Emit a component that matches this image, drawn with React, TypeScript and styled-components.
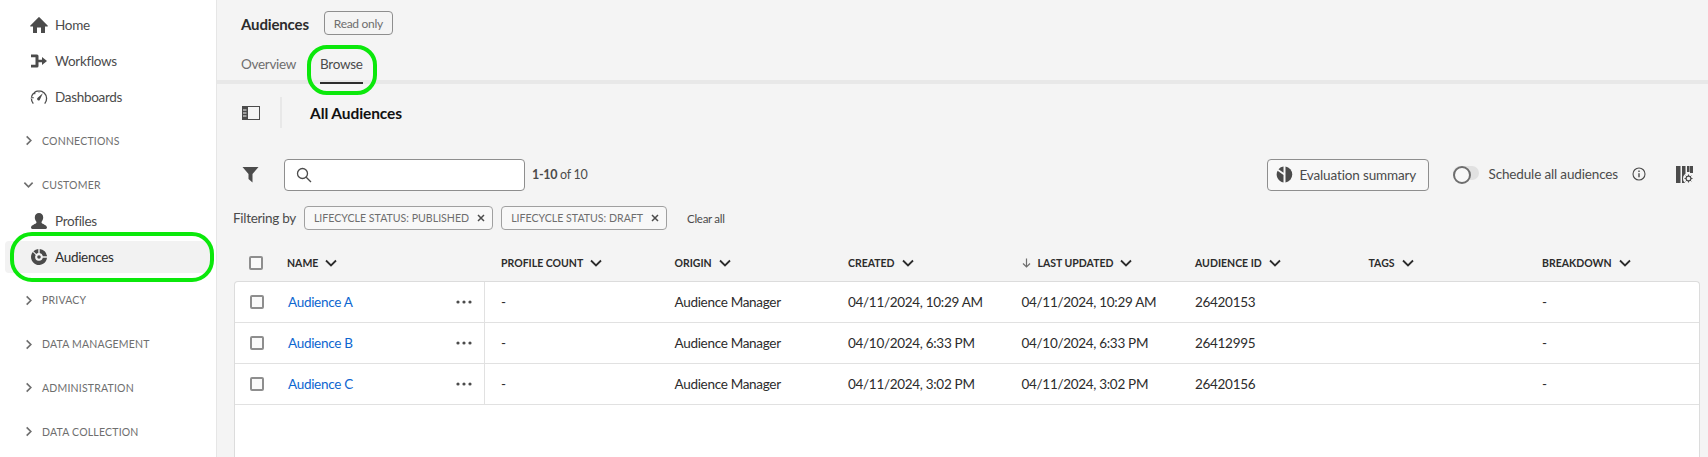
import styled, { createGlobalStyle } from 'styled-components';

const GlobalStyle = createGlobalStyle`
  html, body {
    margin: 0;
    padding: 0;
    height: 100%;
    overflow: hidden;
  }
  body {
    font-family: Lato, "Noto Sans", sans-serif;
    font-size: 13.5px;
    letter-spacing: -0.3px;
    color: #2c2c2c;
    background: #f4f4f4;
  }
  * {
    box-sizing: border-box;
  }
`;

const Page = styled.div`
  display: flex;
  width: 1708px;
  height: 457px;
  overflow: hidden;
`;

const Sidebar = styled.nav`
  flex: 0 0 217px;
  display: flex;
  flex-direction: column;
  padding: 7px 4px 0 5px;
  background: #ffffff;
  border-right: 1px solid #e6e6e6;
`;

const NavItem = styled.div<{ $active?: boolean }>`
  position: relative;
  display: flex;
  align-items: center;
  flex: 0 0 36px;
  gap: 7px;
  padding-left: 25px;
  color: ${(p) => (p.$active ? '#2c2c2c' : '#4b4b4b')};

  ${(p) =>
    p.$active &&
    `
    &::before {
      content: '';
      position: absolute;
      left: 0;
      right: 0;
      top: 2px;
      bottom: 2px;
      background: #f2f2f2;
      border-radius: 4px;
    }
  `}

  & > * {
    position: relative;
  }
`;

const NavIcon = styled.svg`
  width: 18px;
  height: 18px;
  flex: none;
  fill: #4b4b4b;
`;

const Section = styled.div`
  display: flex;
  align-items: center;
  flex: 0 0 36px;
  margin-top: 7.75px;
  padding-left: 18px;
  gap: 8px;
  font-size: 10.5px;
  letter-spacing: 0.2px;
  color: #6e6e6e;
`;

const SectionChevron = styled.svg`
  width: 11px;
  height: 11px;
  flex: none;
  fill: none;
  stroke: #6e6e6e;
  stroke-width: 1.8;
`;

const Ring = styled.div<{ $top: number; $left: number; $right: number; $bottom: number; $radius: number }>`
  position: absolute;
  top: ${(p) => p.$top}px;
  left: ${(p) => p.$left}px;
  right: ${(p) => p.$right}px;
  bottom: ${(p) => p.$bottom}px;
  border: 4px solid #0be80b;
  border-radius: ${(p) => p.$radius}px;
  pointer-events: none;
`;

const Main = styled.main`
  flex: 1;
  min-width: 0;
  display: flex;
  flex-direction: column;
  background: #f4f4f4;
`;

const TitleBar = styled.div`
  display: flex;
  align-items: center;
  gap: 15px;
  height: 47px;
  padding: 0 0 0 24px;
`;

const PageTitle = styled.div`
  font-weight: 700;
  font-size: 15px;
  letter-spacing: -0.15px;
  color: #2c2c2c;
`;

const ReadOnly = styled.div`
  display: flex;
  align-items: center;
  justify-content: center;
  width: 69px;
  height: 24px;
  margin-top: -1px;
  font-size: 12px;
  color: #6e6e6e;
  border: 1px solid #8e8e8e;
  border-radius: 4px;
`;

const Tabs = styled.div`
  display: flex;
  gap: 24px;
  height: 37px;
  padding-left: 24px;
  border-bottom: 4px solid #e8e8e8;
`;

const Tab = styled.div<{ $selected?: boolean }>`
  position: relative;
  height: 37px;
  padding-top: 9px;
  color: ${(p) => (p.$selected ? '#4b4b4b' : '#6e6e6e')};
  ${(p) => p.$selected && 'border-bottom: 2px solid #2c2c2c;'}
`;

const ListHeader = styled.div`
  display: flex;
  align-items: center;
  height: 43px;
  margin-top: 7px;
  padding-left: 25px;
`;

const PanelIcon = styled.svg`
  width: 18px;
  height: 14px;
  flex: none;
`;

const VDivider = styled.div`
  width: 2px;
  height: 31px;
  margin: 0 28px 0 20px;
  background: #e8e8e8;
`;

const ListTitle = styled.div`
  font-weight: 700;
  font-size: 15.5px;
  letter-spacing: -0.1px;
  color: #111111;
`;

const Toolbar = styled.div`
  display: flex;
  align-items: center;
  height: 33px;
  margin-top: 24px;
  padding: 0 15px 0 25px;
`;

const Funnel = styled.svg`
  width: 17px;
  height: 17px;
  flex: none;
  fill: #4b4b4b;
  margin-right: 25px;
`;

const SearchBox = styled.div`
  display: flex;
  align-items: center;
  width: 241px;
  height: 32px;
  padding-left: 11px;
  background: #ffffff;
  border: 1px solid #8e8e8e;
  border-radius: 4px;
`;

const SearchIcon = styled.svg`
  width: 16px;
  height: 16px;
  fill: none;
  stroke: #4b4b4b;
  stroke-width: 1.3;
`;

const Count = styled.div`
  margin-left: 7px;
  font-size: 12.5px;
  color: #4b4b4b;

  b {
    font-weight: 700;
  }
`;

const Spacer = styled.div`
  flex: 1;
`;

const SummaryButton = styled.div`
  display: flex;
  align-items: center;
  gap: 7px;
  width: 162px;
  height: 32px;
  padding-left: 8px;
  letter-spacing: -0.15px;
  color: #4b4b4b;
  background: #f8f8f8;
  border: 1px solid #8e8e8e;
  border-radius: 4px;
`;

const SummaryIcon = styled.svg`
  width: 17px;
  height: 17px;
  flex: none;
  fill: #4b4b4b;
`;

const Toggle = styled.div`
  position: relative;
  width: 26px;
  height: 14px;
  margin: -3px 10px 0 24px;
  background: #e1e1e1;
  border-radius: 7px;

  &::before {
    content: '';
    position: absolute;
    left: 0;
    top: 0;
    width: 14px;
    height: 14px;
    background: #f8f8f8;
    border: 2px solid #6e6e6e;
    border-radius: 50%;
  }
`;

const ToggleLabel = styled.div`
  margin-top: -2px;
  letter-spacing: -0.15px;
  color: #4b4b4b;
`;

const InfoIcon = styled.svg`
  width: 14px;
  height: 14px;
  margin: -2px 30px 0 14px;
  flex: none;
  fill: none;
  stroke: #4b4b4b;
  stroke-width: 1.1;
`;

const ColumnsIcon = styled.svg`
  width: 17px;
  height: 17px;
  flex: none;
  fill: #4b4b4b;
`;

const FilterRow = styled.div`
  display: flex;
  align-items: center;
  height: 24px;
  margin-top: 15px;
  padding-left: 16px;
`;

const FilterLabel = styled.div`
  margin-right: 8px;
  color: #4b4b4b;
`;

const Chip = styled.div`
  display: flex;
  align-items: center;
  gap: 8px;
  height: 24px;
  padding: 0 7px 0 9px;
  margin-right: 8px;
  font-size: 10.6px;
  letter-spacing: 0;
  color: #6e6e6e;
  background: #f8f8f8;
  border: 1px solid #a0a0a0;
  border-radius: 4px;
`;

const ChipClose = styled.svg`
  width: 8px;
  height: 8px;
  flex: none;
  fill: none;
  stroke: #4b4b4b;
  stroke-width: 1.5;
`;

const ClearAll = styled.div`
  margin-left: 12px;
  font-size: 11.5px;
  color: #4b4b4b;
`;

const TableHead = styled.div`
  display: grid;
  grid-template-columns: 251px repeat(7, 173.5px);
  align-items: center;
  height: 37px;
  margin: 14px 0 0 17px;
`;

const TableCard = styled.div`
  flex: 1;
  margin: 0 8px 0 17px;
  background: #ffffff;
  border: 1px solid #dcdcdc;
  border-bottom: none;
  border-radius: 4px 4px 0 0;
`;

const TableRow = styled.div`
  display: grid;
  grid-template-columns: 250px repeat(7, 173.5px);
  height: 41px;
  border-bottom: 1px solid #e1e1e1;
`;

const NameHead = styled.div`
  display: flex;
  align-items: center;
  padding-left: 15px;
`;

const HeadCell = styled.div<{ $flush?: boolean }>`
  display: flex;
  align-items: center;
  gap: 7px;
  padding-left: ${(p) => (p.$flush ? 0 : 16)}px;
  font-size: 10.5px;
  letter-spacing: 0;
  font-weight: 700;
  color: #2c2c2c;
`;

const HeadChevron = styled.svg`
  width: 12px;
  height: 12px;
  flex: none;
  fill: none;
  stroke: #2c2c2c;
  stroke-width: 1.8;
`;

const SortArrow = styled.svg`
  width: 9px;
  height: 10px;
  flex: none;
  fill: none;
  stroke: #6e6e6e;
  stroke-width: 1.2;
`;

const Checkbox = styled.div`
  flex: none;
  width: 14px;
  height: 14px;
  margin-right: 24px;
  background: #fafafa;
  border: 2px solid #8e8e8e;
  border-radius: 2px;
`;

const NameCell = styled.div`
  display: flex;
  align-items: center;
  padding-left: 15px;
  border-right: 1px solid #e1e1e1;
`;

const AudienceLink = styled.a`
  flex: 1;
  color: #0d66d0;
`;

const MoreDots = styled.svg`
  width: 16px;
  height: 4px;
  margin-right: 12px;
  flex: none;
  fill: #4b4b4b;
`;

const Cell = styled.div`
  display: flex;
  align-items: center;
  padding-left: 16px;
  color: #2c2c2c;
`;

function Chevron({ open }: { open?: boolean }) {
  return (
    <SectionChevron viewBox="0 0 12 12">
      <path d={open ? 'M1.5 4 6 8.5 10.5 4' : 'M4 1.5 8.5 6 4 10.5'} />
    </SectionChevron>
  );
}

function HeadLabel({ label, sorted, flush }: { label: string; sorted?: boolean; flush?: boolean }) {
  return (
    <HeadCell $flush={flush}>
      {sorted && (
        <SortArrow viewBox="0 0 9 10">
          <path d="M4.5 0.5v8.5M1 5.5 4.5 9 8 5.5" />
        </SortArrow>
      )}
      {label}
      <HeadChevron viewBox="0 0 12 12">
        <path d="M1 3.5 6 8.5 11 3.5" />
      </HeadChevron>
    </HeadCell>
  );
}

const audiences = [
  { name: 'Audience A', created: '04/11/2024, 10:29 AM', id: '26420153' },
  { name: 'Audience B', created: '04/10/2024, 6:33 PM', id: '26412995' },
  { name: 'Audience C', created: '04/11/2024, 3:02 PM', id: '26420156' },
];

export default function App() {
  return (
    <Page>
      <GlobalStyle />
      <Sidebar>
        <NavItem>
          <NavIcon viewBox="0 0 18 18">
            <path d="M17.6 9.6 9.4 1.3a.55.55 0 0 0-.8 0L.4 9.6a.5.5 0 0 0 .4.9H3v6a.5.5 0 0 0 .5.5H7v-5.5h4V17h3.5a.5.5 0 0 0 .5-.5v-6h2.2a.5.5 0 0 0 .4-.9Z" />
          </NavIcon>
          <span>Home</span>
        </NavItem>
        <NavItem>
          <NavIcon viewBox="0 0 18 18">
            <path d="M1 2.500h6a1.500 1.500 0 0 1 1.500 1.500V7.800h3.500V5l5 4-5 4v-2.800H8.500V14A1.500 1.500 0 0 1 7 15.500H1v-2.800h4.500V5.300H1Z" />
          </NavIcon>
          <span>Workflows</span>
        </NavItem>
        <NavItem>
          <NavIcon viewBox="0 0 18 18">
            <path
              d="M3.300 15.600A7.600 7.600 0 1 1 14.700 15.600"
              fill="none"
              stroke="#4b4b4b"
              strokeWidth="1.300"
            />
            <path
              d="M1.200 10.200h2M3.400 4.400l1.400 1.400M9 2v2.200"
              fill="none"
              stroke="#ffffff"
              strokeWidth="1"
            />
            <path d="M1.800 9.800h2M4 4.800l1.300 1.300M9 2.400v2" fill="none" stroke="#4b4b4b" strokeWidth="1.100" />
            <path d="M12.800 5.300 10.100 11.200a1.500 1.500 0 1 1-2.400-1.500Z" />
          </NavIcon>
          <span>Dashboards</span>
        </NavItem>
        <Section>
          <Chevron />
          CONNECTIONS
        </Section>
        <Section>
          <Chevron open />
          CUSTOMER
        </Section>
        <NavItem>
          <NavIcon viewBox="0 0 18 18">
            <path d="M17 15.600c0 .800-.600 1.400-1.400 1.400H2.400C1.600 17 1 16.400 1 15.600c0-2.600 5-3.600 5.400-4.800.2-.500.1-1-.2-1.300C5.300 8.500 4.800 7 4.800 5.300 4.800 2.600 6.600 1 9 1s4.200 1.600 4.200 4.300c0 1.700-.500 3.200-1.400 4.200-.3.300-.4.800-.2 1.300C12 12 17 13 17 15.600Z" />
          </NavIcon>
          <span>Profiles</span>
        </NavItem>
        <NavItem $active>
          <NavIcon viewBox="0 0 18 18">
            <path d="M8.300 1a8 8 0 0 0-4.900 2.300l2.900 2.800a3.800 3.800 0 0 1 2-1Z" />
            <path d="M2.800 4A8 8 0 1 0 17 9.800h-4.200a3.900 3.900 0 0 1-7.700-.8 3.800 3.800 0 0 1 .6-2.100Z" />
            <path d="M9.700 1v4.100a3.800 3.800 0 0 1 3.100 3.200H17A8 8 0 0 0 9.700 1Z" />
            <circle cx="9" cy="9" r="1.800" />
          </NavIcon>
          <span>Audiences</span>
          <Ring $top={-7} $left={5} $right={-2} $bottom={-7} $radius={22} />
        </NavItem>
        <Section>
          <Chevron />
          PRIVACY
        </Section>
        <Section>
          <Chevron />
          DATA MANAGEMENT
        </Section>
        <Section>
          <Chevron />
          ADMINISTRATION
        </Section>
        <Section>
          <Chevron />
          DATA COLLECTION
        </Section>
      </Sidebar>

      <Main>
        <TitleBar>
          <PageTitle>Audiences</PageTitle>
          <ReadOnly>Read only</ReadOnly>
        </TitleBar>
        <Tabs>
          <Tab>Overview</Tab>
          <Tab $selected>
            Browse
            <Ring $top={-2} $left={-13} $right={-14} $bottom={-13} $radius={20} />
          </Tab>
        </Tabs>

        <ListHeader>
          <PanelIcon viewBox="0 0 18 14">
            <rect x="0.5" y="0.5" width="17" height="13" fill="none" stroke="#4b4b4b" />
            <rect x="0" y="0" width="6" height="14" fill="#4b4b4b" />
            <path d="M1 4h3.500M1 7h3.500M1 10h3.500" stroke="#f4f4f4" />
          </PanelIcon>
          <VDivider />
          <ListTitle>All Audiences</ListTitle>
        </ListHeader>

        <Toolbar>
          <Funnel viewBox="0 0 17 17">
            <path d="M0.500 1h16L10.500 8v8.500L6.500 13V8Z" />
          </Funnel>
          <SearchBox>
            <SearchIcon viewBox="0 0 16 16">
              <circle cx="6.500" cy="6.500" r="5" />
              <path d="M10.200 10.200 15 15" />
            </SearchIcon>
          </SearchBox>
          <Count>
            <b>1-10</b> of 10
          </Count>
          <Spacer />
          <SummaryButton>
            <SummaryIcon viewBox="0 0 17 17">
              <path d="M9.500.6v15.800a8 8 0 0 0 0-15.800Z" />
              <path d="M7.500.6a8 8 0 0 0-5 2.600l5 3.500Z" />
              <path d="M1.600 4.700A8 8 0 0 0 7.500 16.400V9Z" />
            </SummaryIcon>
            Evaluation summary
          </SummaryButton>
          <Toggle />
          <ToggleLabel>Schedule all audiences</ToggleLabel>
          <InfoIcon viewBox="0 0 14 14">
            <circle cx="7" cy="7" r="6" />
            <path d="M7 6.200v4M7 3.600v1.300" strokeWidth="1.400" />
          </InfoIcon>
          <ColumnsIcon viewBox="0 0 17 17">
            <path d="M0 0h4.500v17H0ZM6 0h3.500v17H6ZM11 0h2.500v6H11ZM14 0h3v7h-3Z" />
            <circle cx="12.500" cy="12.500" r="5.500" fill="#f4f4f4" />
            <circle cx="12.500" cy="12.500" r="2.400" fill="none" stroke="#4b4b4b" strokeWidth="1.200" />
            <path
              d="M12.500 8.500v1.600M12.500 14.900v1.600M8.500 12.500h1.600M14.900 12.500h1.600M9.700 9.700l1.100 1.100M14.200 14.200l1.100 1.100M15.300 9.700l-1.100 1.100M10.800 14.200l-1.100 1.100"
              stroke="#4b4b4b"
              strokeWidth="1"
            />
          </ColumnsIcon>
        </Toolbar>

        <FilterRow>
          <FilterLabel>Filtering by</FilterLabel>
          <Chip>
            LIFECYCLE STATUS: PUBLISHED
            <ChipClose viewBox="0 0 8 8">
              <path d="M1 1 7 7M7 1 1 7" />
            </ChipClose>
          </Chip>
          <Chip>
            LIFECYCLE STATUS: DRAFT
            <ChipClose viewBox="0 0 8 8">
              <path d="M1 1 7 7M7 1 1 7" />
            </ChipClose>
          </Chip>
          <ClearAll>Clear all</ClearAll>
        </FilterRow>

        <TableHead>
          <NameHead>
            <Checkbox />
            <HeadLabel label="NAME" flush />
          </NameHead>
          <HeadLabel label="PROFILE COUNT" />
          <HeadLabel label="ORIGIN" />
          <HeadLabel label="CREATED" />
          <HeadLabel label="LAST UPDATED" sorted />
          <HeadLabel label="AUDIENCE ID" />
          <HeadLabel label="TAGS" />
          <HeadLabel label="BREAKDOWN" />
        </TableHead>

        <TableCard>
          {audiences.map((row) => (
            <TableRow key={row.id}>
              <NameCell>
                <Checkbox />
                <AudienceLink>{row.name}</AudienceLink>
                <MoreDots viewBox="0 0 16 4">
                  <circle cx="2" cy="2" r="1.600" />
                  <circle cx="8" cy="2" r="1.600" />
                  <circle cx="14" cy="2" r="1.600" />
                </MoreDots>
              </NameCell>
              <Cell>-</Cell>
              <Cell>Audience Manager</Cell>
              <Cell>{row.created}</Cell>
              <Cell>{row.created}</Cell>
              <Cell>{row.id}</Cell>
              <Cell />
              <Cell>-</Cell>
            </TableRow>
          ))}
        </TableCard>
      </Main>
    </Page>
  );
}
